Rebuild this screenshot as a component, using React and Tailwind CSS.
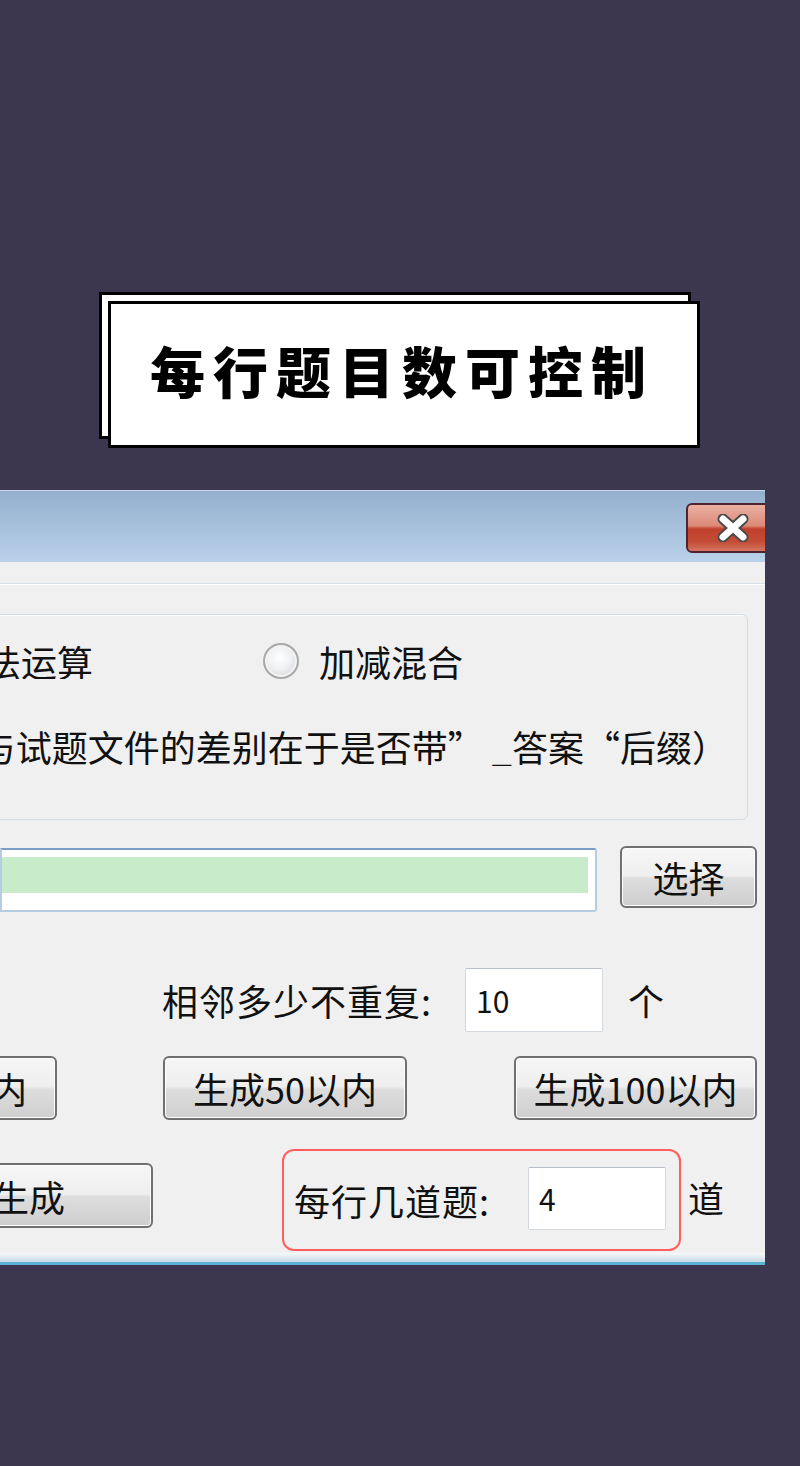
import React from "react";

const btn =
  "box-border flex items-center justify-center rounded-[6px] border-2 border-[#707070] bg-[linear-gradient(to_bottom,#f7f7f7_0%,#eeeeee_48%,#dddddd_52%,#cfcfcf_100%)] text-[36px] leading-none text-[#111] whitespace-nowrap shadow-[inset_0_0_0_1px_#fcfcfc]";

const field =
  "box-border flex items-center bg-white border border-[#d3d8df] border-t-[#b9bfc8] rounded-[2px] text-[30px] leading-none text-[#111] pl-[10px]";

function CloseButton() {
  return (
    <div className="ml-auto mr-[-15px] mt-[12px] w-[94px] h-[50px] box-border rounded-[6px] border-2 border-[#4e2430] bg-[linear-gradient(to_bottom,#eab0a2_0%,#dc8a78_45%,#c0412b_52%,#c44c36_80%,#d67562_100%)] flex items-center justify-center">
      <svg width="34" height="28" viewBox="0 0 34 28">
        <path d="M7 5 L27 23 M27 5 L7 23" stroke="#4a4a4a" strokeWidth="11" strokeLinecap="round" />
        <path d="M7 5 L27 23 M27 5 L7 23" stroke="#ffffff" strokeWidth="7" strokeLinecap="round" />
      </svg>
    </div>
  );
}

export default function App() {
  return (
    <div className="w-[800px] h-[1466px] bg-[#3c374f] overflow-hidden font-['Noto_Sans_CJK_SC','Noto_Sans',sans-serif]">
      {/* Title card */}
      <div className="pt-[301px] pl-[108px]">
        <div className="box-border w-[592px] h-[147px] border-[3px] border-black bg-white flex items-center justify-center pr-[4px] pb-[10px] shadow-[-9px_-9px_0_-3px_#ffffff,-9px_-9px_0_0_#000000]">
          <span className="text-[55px] font-black tracking-[8px] text-black leading-none">
            每行题目数可控制
          </span>
        </div>
      </div>

      {/* Window */}
      <div className="mt-[42px] w-[765px] h-[775px] overflow-hidden flex flex-col bg-[#f0f0f0]">
        {/* Title bar */}
        <div className="h-[72px] box-border border-t border-[#c9d8e8] bg-[linear-gradient(to_bottom,#94b0ce,#b9d1ea)] flex items-start">
          <CloseButton />
        </div>

        <div className="h-[21px]" />
        <div className="h-[2px] border-t border-[#d6dfe9] bg-white" />

        {/* Group box */}
        <div className="mt-[29px] ml-[-20px] w-[768px] h-[206px] box-border rounded-[6px] border border-[#d3dde5] shadow-[inset_1px_1px_0_#ffffff] flex flex-col">
          <div className="mt-[27px] h-[38px] flex items-center">
            <div className="w-[112px] flex justify-end overflow-hidden whitespace-nowrap text-[36px] leading-none text-[#111]">
              减法运算
            </div>
            <div className="ml-[170px] w-[36px] h-[36px] box-border rounded-full border-2 border-[#a9a9a9] bg-[radial-gradient(circle_at_45%_40%,#ffffff_0%,#eef0f2_45%,#c9cbcf_100%)] shadow-[inset_0_0_0_2px_#f4f4f4]" />
            <div className="ml-[20px] text-[36px] leading-none text-[#111] whitespace-nowrap">加减混合</div>
          </div>
          <div className="mt-[46px] h-[40px] w-[747px] flex items-center justify-end overflow-hidden whitespace-nowrap text-[36px] leading-none text-[#111]">
            （答案文件与试题文件的差别在于是否带” _答案“后缀）
          </div>
        </div>

        {/* Path row */}
        <div className="mt-[26px] h-[66px] flex items-start">
          <div className="mt-[2px] w-[597px] h-[64px] box-border border-2 border-[#b5cce3] border-t-[#7a9ec7] bg-white pt-[7px] pr-[7px] rounded-r-[3px]">
            <div className="h-[36px] bg-[#c8ecca]" />
          </div>
          <div className={`${btn} ml-[23px] w-[137px] h-[62px]`}>选择</div>
        </div>

        {/* Adjacent row */}
        <div className="mt-[56px] h-[64px] flex items-center">
          <div className="w-[465px] pr-[33px] box-border text-right text-[36px] tracking-[1px] leading-none text-[#111] whitespace-nowrap">
            相邻多少不重复:
          </div>
          <div className={`${field} w-[138px] h-[64px]`}>10</div>
          <div className="ml-[25px] text-[36px] leading-none text-[#111]">个</div>
        </div>

        {/* Buttons row */}
        <div className="mt-[24px] h-[64px] flex items-center">
          <div className={`${btn} ml-[-187px] w-[244px] h-[64px] shrink-0`}>生成20以内</div>
          <div className={`${btn} ml-[106px] w-[244px] h-[64px] shrink-0`}>生成50以内</div>
          <div className={`${btn} ml-[107px] w-[243px] h-[64px] shrink-0`}>生成100以内</div>
        </div>

        {/* Last row */}
        <div className="mt-[29px] h-[102px] flex items-start">
          <div className={`${btn} mt-[14px] ml-[-167px] w-[320px] h-[65px] shrink-0`}>一键生成</div>
          <div className="ml-[129px] w-[399px] h-[102px] box-border rounded-[12px] border-2 border-[#ff5f5f] flex items-center pl-[10px]">
            <div className="w-[234px] text-[36px] tracking-[1px] leading-none text-[#111] whitespace-nowrap">每行几道题:</div>
            <div className={`${field} w-[138px] h-[63px] mt-[-4px]`}>4</div>
          </div>
          <div className="ml-[7px] self-center mt-[-6px] text-[36px] leading-none text-[#111]">道</div>
        </div>

        <div className="mt-[2px] h-[12px] box-border border-b-[3px] border-[#5bb4d8] bg-[linear-gradient(to_bottom,#f7f9fb,#c9dbe6)]" />
      </div>
    </div>
  );
}
